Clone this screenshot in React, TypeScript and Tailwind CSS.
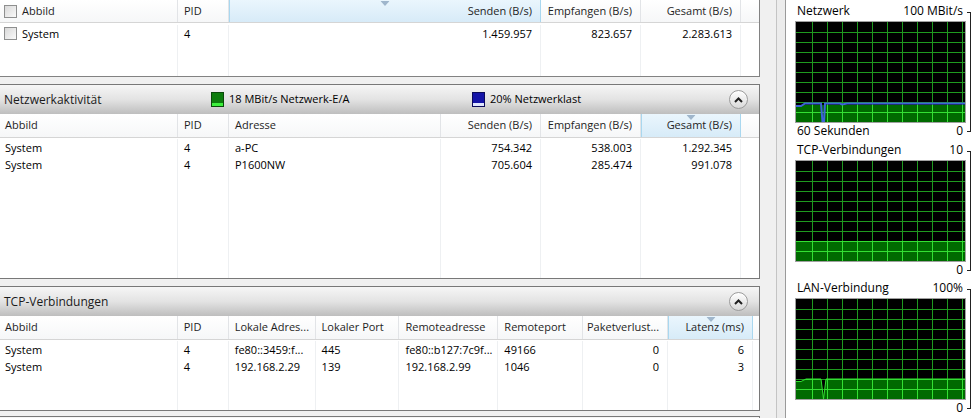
import React from "react";

type Col = {
  label: string;
  w: string;
  right?: boolean;
  sorted?: boolean;
  check?: boolean;
};

const procCols: Col[] = [
  { label: "Abbild", w: "w-[178px]", check: true },
  { label: "PID", w: "w-[51px]" },
  { label: "Senden (B/s)", w: "w-[312px]", right: true, sorted: true },
  { label: "Empfangen (B/s)", w: "w-[100px]", right: true },
  { label: "Gesamt (B/s)", w: "w-[100px]", right: true },
  { label: "", w: "flex-1" },
];
const procRows = [["System", "4", "1.459.957", "823.657", "2.283.613", ""]];

const netCols: Col[] = [
  { label: "Abbild", w: "w-[178px]" },
  { label: "PID", w: "w-[51px]" },
  { label: "Adresse", w: "w-[212px]" },
  { label: "Senden (B/s)", w: "w-[100px]", right: true },
  { label: "Empfangen (B/s)", w: "w-[100px]", right: true },
  { label: "Gesamt (B/s)", w: "w-[100px]", right: true, sorted: true },
  { label: "", w: "flex-1" },
];
const netRows = [
  ["System", "4", "a-PC", "754.342", "538.003", "1.292.345", ""],
  ["System", "4", "P1600NW", "705.604", "285.474", "991.078", ""],
];

const tcpCols: Col[] = [
  { label: "Abbild", w: "w-[178px]" },
  { label: "PID", w: "w-[51px]" },
  { label: "Lokale Adres...", w: "w-[87px]" },
  { label: "Lokaler Port", w: "w-[84px]" },
  { label: "Remoteadresse", w: "w-[99px]" },
  { label: "Remoteport", w: "w-[85px]" },
  { label: "Paketverlust...", w: "w-[85px]", right: true },
  { label: "Latenz (ms)", w: "w-[85px]", right: true, sorted: true },
  { label: "", w: "flex-1" },
];
const tcpRows = [
  ["System", "4", "fe80::3459:f...", "445", "fe80::b127:7c9f...", "49166", "0", "6", ""],
  ["System", "4", "192.168.2.29", "139", "192.168.2.99", "1046", "0", "3", ""],
];

function Check() {
  return (
    <span className="mr-[5px] inline-block h-[13px] w-[13px] shrink-0 border border-[#8e8f8f] bg-linear-to-br from-[#d8d8d8] to-[#fafafa]" />
  );
}

function SortArrow() {
  return (
    <svg width="9" height="5" className="absolute left-1/2 top-[1px] -translate-x-1/2">
      <path d="M0 0 L9 0 L4.5 5 Z" fill="#9fb6cc" />
    </svg>
  );
}

function Table({ cols, rows, head, pad }: { cols: Col[]; rows: string[][]; head: string; pad: string }) {
  return (
    <div className="flex min-h-0 flex-1 flex-col bg-white">
      <div className={`flex ${head} shrink-0 border-b border-[#d5d5d5] bg-linear-to-b from-white to-[#f6f7f8] text-[#1e1e1e]`}>
        {cols.map((c, i) => (
          <div
            key={i}
            className={`relative flex h-full items-center ${c.w} ${
              c.sorted
                ? "border-x border-[#a9d7ef] bg-linear-to-b from-[#eaf6fd] to-[#d7ebf8]"
                : i < cols.length - 1
                ? "border-r border-[#e2e4e7]"
                : ""
            } ${c.right ? "justify-end pr-[8px]" : c.check ? "pl-[4px]" : i === 0 ? "pl-[5px]" : "pl-[6px]"}`}
          >
            {c.sorted && <SortArrow />}
            {c.check && <Check />}
            <span className="whitespace-nowrap">{c.label}</span>
          </div>
        ))}
      </div>
      <div className={`flex flex-1 ${pad}`}>
        {cols.map((c, i) => (
          <div key={i} className={`flex flex-col ${c.w} ${i < cols.length - 1 ? "border-r border-[#eef0f2]" : ""}`}>
            {rows.map((r, j) => (
              <div
                key={j}
                className={`flex h-[17px] items-center whitespace-nowrap leading-[17px] ${
                  c.right ? "justify-end pr-[8px]" : c.check ? "pl-[4px]" : i === 0 ? "pl-[5px]" : "pl-[6px]"
                }`}
              >
                {c.check && <Check />}
                {r[i]}
              </div>
            ))}
          </div>
        ))}
      </div>
    </div>
  );
}

function CollapseButton() {
  return (
    <div className="flex h-[19px] w-[19px] items-center justify-center rounded-full border border-[#9b9b9b] bg-linear-to-b from-white to-[#d9d9d9] shadow-[inset_0_1px_0_#fff]">
      <svg width="9" height="6" viewBox="0 0 9 6">
        <path d="M1 5 L4.5 1.5 L8 5" fill="none" stroke="#202020" strokeWidth="2" />
      </svg>
    </div>
  );
}

function SectionHeader({ title, children }: { title: string; children?: React.ReactNode }) {
  return (
    <div className="flex h-[29px] shrink-0 items-center bg-linear-to-b from-[#f6f6f6] via-[#e3e3e3] to-[#bebebe] pl-[4px] pr-[11px]">
      <div className="w-[208px] text-[12px] text-[#1a1a1a]">{title}</div>
      <div className="flex flex-1 items-center">{children}</div>
      <CollapseButton />
    </div>
  );
}

function Graph({ id, fill, edge, line }: { id: string; fill: string; edge?: string; line?: string }) {
  const vx = Array.from({ length: 11 }, (_, i) => 17.5 + 15 * i);
  const hy = Array.from({ length: 9 }, (_, i) => 91.5 - 10 * i);
  const grid = (
    <>
      {vx.map((x) => (
        <line key={"v" + x} x1={x} y1="0" x2={x} y2="102" />
      ))}
      {hy.map((y) => (
        <line key={"h" + y} x1="0" y1={y} x2="171" y2={y} />
      ))}
    </>
  );
  return (
    <svg width="171" height="102" className="block">
      <defs>
        <clipPath id={id}>
          <polygon points={fill} />
        </clipPath>
      </defs>
      <rect x="0" y="0" width="171" height="102" fill="#000" />
      <polygon points={fill} fill="#006a00" />
      <g stroke="#1f9a1f" strokeWidth="1">{grid}</g>
      <g stroke="#33e033" strokeWidth="1" clipPath={`url(#${id})`}>
        {grid}
      </g>
      {edge && <polyline points={edge} fill="none" stroke="#33e033" strokeWidth="1" />}
      {line && <polyline points={line} fill="none" stroke="#3d62d8" strokeWidth="2" />}
      <rect x="0.5" y="0.5" width="170" height="101" fill="none" stroke="#a0a0a0" />
    </svg>
  );
}

function GraphBlock({
  title,
  max,
  bottom,
  children,
  className,
}: {
  title: string;
  max: string;
  bottom?: string;
  children: React.ReactNode;
  className?: string;
}) {
  return (
    <div className={`flex ${className ?? ""}`}>
      <div className="flex w-[171px] flex-col">
        <div className="flex h-[16px] items-center justify-between pl-[2px] pr-[3px] leading-[16px]">
          <span>{title}</span>
          <span>{max}</span>
        </div>
        <div className="mt-[2px]">{children}</div>
        <div className="flex h-[16px] items-center justify-between pl-[2px] pr-[3px] leading-[16px]">
          <span>{bottom ?? ""}</span>
          <span>0</span>
        </div>
      </div>
      <div className="mb-[7px] ml-[1px] mt-[9px] w-[4px] border-y border-r border-[#222]" />
    </div>
  );
}

export default function App() {
  return (
    <div className="flex h-[418px] w-[978px] overflow-hidden bg-[#f0f0f0] font-['Open_Sans',sans-serif] text-[11px] text-black">
      <div className="flex w-[760px] shrink-0 flex-col">
        <div className="flex h-[77px] shrink-0 flex-col border-b border-r border-[#828282]">
          <Table cols={procCols} rows={procRows} head="h-[23px]" pad="pt-[2px]" />
        </div>

        <div className="mt-[7px] flex h-[195px] shrink-0 flex-col border-y border-r border-[#787878]">
          <SectionHeader title="Netzwerkaktivität">
            <div className="flex w-[261px] items-center">
              <span className="mr-[6px] h-[13px] w-[11px] border-b-[3px] border-[#3cf03c] bg-[#0d7d0d] outline outline-[#0a4a0a]" />
              <span>18 MBit/s Netzwerk-E/A</span>
            </div>
            <div className="flex items-center">
              <span className="mr-[6px] h-[13px] w-[11px] border-b-[3px] border-[#dfe6ff] bg-[#1414a8] outline outline-[#0a0a5a]" />
              <span>20% Netzwerklast</span>
            </div>
          </SectionHeader>
          <Table cols={netCols} rows={netRows} head="h-[24px]" pad="pt-[1px]" />
        </div>

        <div className="mt-[7px] flex h-[125px] shrink-0 flex-col border-y border-r border-[#787878]">
          <SectionHeader title="TCP-Verbindungen" />
          <Table cols={tcpCols} rows={tcpRows} head="h-[24px]" pad="pt-[1px]" />
        </div>

        <div className="mt-[5px] h-[20px] shrink-0 border-t border-r border-[#787878] bg-linear-to-b from-[#f6f6f6] to-[#bebebe]" />
      </div>

      <div className="flex w-[25px] shrink-0">
        <div className="w-[16px] bg-[#f0f0f0]" />
        <div className="w-[1px] bg-[#c4c4c4]" />
        <div className="flex-1 bg-[#ececec]" />
      </div>

      <div className="flex flex-1 flex-col border-l border-[#9a9a9a] bg-white pl-[9px] pt-[3px] text-[12px]">
        <GraphBlock title="Netzwerk" max="100 MBit/s" bottom="60 Sekunden">
          <Graph
            id="g1"
            fill="1,84 170,84 170,101 1,101"
            line="1,85 6,85 10,82.5 26,82.5 27.5,101 29,101 30,82.5 45,82.5 47,83.5 52,82.5 170,82.5"
          />
        </GraphBlock>
        <GraphBlock title="TCP-Verbindungen" max="10" className="mt-[3px]">
          <Graph id="g2" fill="1,81 170,81 170,101 1,101" />
        </GraphBlock>
        <GraphBlock title="LAN-Verbindung" max="100%" className="mt-[2px]">
          <Graph
            id="g3"
            fill="1,83.5 6,83.5 11,81 26,81 28.5,101 31,81 170,81 170,101 1,101"
            edge="1,83.5 6,83.5 11,81 26,81 28.5,101 31,81 170,81"
          />
        </GraphBlock>
      </div>
    </div>
  );
}
